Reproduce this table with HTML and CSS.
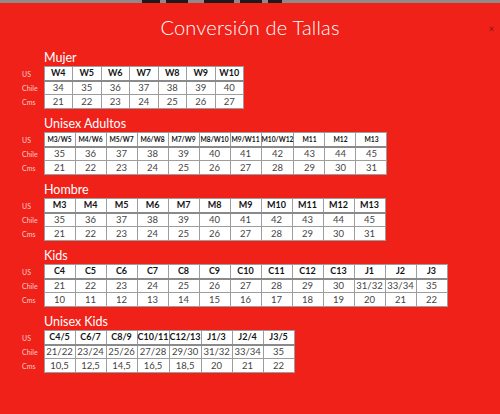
FILE: index.html
```html
<!DOCTYPE html>
<html lang="es">
<head>
<meta charset="utf-8">
<title>Conversión de Tallas</title>
<link rel="stylesheet" href="styles.css">
</head>
<body>
<div class="topbar">
  <span class="blk b1"></span><span class="blk b2"></span><span class="blk b3"></span><span class="blk b4"></span><span class="blk b5"></span>
</div>
<div class="modal">
  <span class="close">×</span>
  <h1 class="title">Conversión de Tallas</h1>

  <section class="group">
    <h2 class="group-title">Mujer</h2>
    <table class="sizes narrow">
      <tr class="hd"><th class="lbl">US</th><td>W4</td><td>W5</td><td>W6</td><td>W7</td><td>W8</td><td>W9</td><td>W10</td></tr>
      <tr><th class="lbl">Chile</th><td>34</td><td>35</td><td>36</td><td>37</td><td>38</td><td>39</td><td>40</td></tr>
      <tr><th class="lbl">Cms</th><td>21</td><td>22</td><td>23</td><td>24</td><td>25</td><td>26</td><td>27</td></tr>
    </table>
  </section>

  <section class="group">
    <h2 class="group-title">Unisex Adultos</h2>
    <table class="sizes small-hd">
      <tr class="hd"><th class="lbl">US</th><td>M3/W5</td><td>M4/W6</td><td>M5/W7</td><td>M6/W8</td><td>M7/W9</td><td>M8/W10</td><td>M9/W11</td><td>M10/W12</td><td>M11</td><td>M12</td><td>M13</td></tr>
      <tr><th class="lbl">Chile</th><td>35</td><td>36</td><td>37</td><td>38</td><td>39</td><td>40</td><td>41</td><td>42</td><td>43</td><td>44</td><td>45</td></tr>
      <tr><th class="lbl">Cms</th><td>21</td><td>22</td><td>23</td><td>24</td><td>25</td><td>26</td><td>27</td><td>28</td><td>29</td><td>30</td><td>31</td></tr>
    </table>
  </section>

  <section class="group">
    <h2 class="group-title">Hombre</h2>
    <table class="sizes">
      <tr class="hd"><th class="lbl">US</th><td>M3</td><td>M4</td><td>M5</td><td>M6</td><td>M7</td><td>M8</td><td>M9</td><td>M10</td><td>M11</td><td>M12</td><td>M13</td></tr>
      <tr><th class="lbl">Chile</th><td>35</td><td>36</td><td>37</td><td>38</td><td>39</td><td>40</td><td>41</td><td>42</td><td>43</td><td>44</td><td>45</td></tr>
      <tr><th class="lbl">Cms</th><td>21</td><td>22</td><td>23</td><td>24</td><td>25</td><td>26</td><td>27</td><td>28</td><td>29</td><td>30</td><td>31</td></tr>
    </table>
  </section>

  <section class="group">
    <h2 class="group-title">Kids</h2>
    <table class="sizes">
      <tr class="hd"><th class="lbl">US</th><td>C4</td><td>C5</td><td>C6</td><td>C7</td><td>C8</td><td>C9</td><td>C10</td><td>C11</td><td>C12</td><td>C13</td><td>J1</td><td>J2</td><td>J3</td></tr>
      <tr><th class="lbl">Chile</th><td>21</td><td>22</td><td>23</td><td>24</td><td>25</td><td>26</td><td>27</td><td>28</td><td>29</td><td>30</td><td>31/32</td><td>33/34</td><td>35</td></tr>
      <tr><th class="lbl">Cms</th><td>10</td><td>11</td><td>12</td><td>13</td><td>14</td><td>15</td><td>16</td><td>17</td><td>18</td><td>19</td><td>20</td><td>21</td><td>22</td></tr>
    </table>
  </section>

  <section class="group">
    <h2 class="group-title">Unisex Kids</h2>
    <table class="sizes">
      <tr class="hd"><th class="lbl">US</th><td>C4/5</td><td>C6/7</td><td>C8/9</td><td>C10/11</td><td>C12/13</td><td>J1/3</td><td>J2/4</td><td>J3/5</td></tr>
      <tr><th class="lbl">Chile</th><td>21/22</td><td>23/24</td><td>25/26</td><td>27/28</td><td>29/30</td><td>31/32</td><td>33/34</td><td>35</td></tr>
      <tr><th class="lbl">Cms</th><td>10,5</td><td>12,5</td><td>14,5</td><td>16,5</td><td>18,5</td><td>20</td><td>21</td><td>22</td></tr>
    </table>
  </section>
</div>
</body>
</html>
```

FILE: styles.css
```css
* { box-sizing: border-box; }

html, body {
  margin: 0;
  padding: 0;
}

body {
  width: 500px;
  height: 414px;
  overflow: hidden;
  background: #ef2119;
  font-family: Lato, "Open Sans", Arial, sans-serif;
  color: #fff;
}

.topbar {
  height: 3px;
  background: #8f8a89;
  display: flex;
  gap: 6px;
  padding-left: 142px;
}

.blk {
  display: block;
  height: 3px;
  background: #1c1a1a;
}
.b1 { width: 18px; }
.b2 { width: 22px; }
.b3 { width: 30px; margin-left: 10px; }
.b4 { width: 22px; }
.b5 { width: 14px; }

.modal {
  position: relative;
}

.close {
  position: absolute;
  top: 9px;
  right: 6px;
  font-size: 9px;
  line-height: 10px;
  color: #7a1a14;
}

.title {
  margin: 12px 0 12px;
  text-align: center;
  font-size: 20px;
  font-weight: 300;
  line-height: 24px;
  letter-spacing: 0.2px;
  color: #fff;
}

.group {
  margin-bottom: 8px;
}

.group-title {
  margin: 0 0 1px 44px;
  font-size: 12.5px;
  font-weight: 400;
  line-height: 14px;
  color: #fff;
}

.sizes {
  border-collapse: collapse;
  table-layout: fixed;
}

.sizes tr {
  height: 14px;
}

.sizes .lbl {
  width: 44px;
  padding: 0 0 0 22px;
  text-align: left;
  font-size: 7px;
  font-weight: 400;
  color: #f9cbc6;
  border: none;
  background: transparent;
}

.sizes td {
  width: 31px;
  height: 14px;
  padding: 0;
  background: #fff;
  border: 1px solid #9d9d9d;
  text-align: center;
  font-size: 9.5px;
  line-height: 12px;
  font-weight: 400;
  color: #444;
  white-space: nowrap;
}

.sizes .hd td {
  font-weight: 700;
  color: #151515;
  font-size: 9px;
  border-bottom: 2px solid #8a8a8a;
}

.narrow td {
  width: 28.5px;
}

.small-hd .hd td {
  font-size: 6.7px;
}
```
